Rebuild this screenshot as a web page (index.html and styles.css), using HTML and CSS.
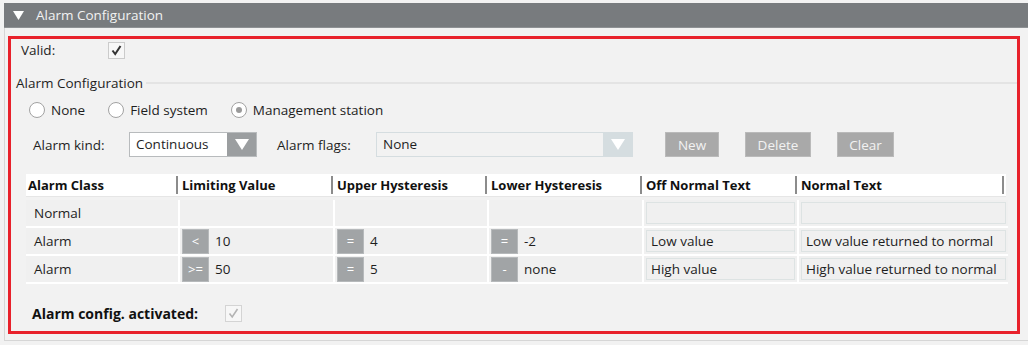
FILE: index.html
```html
<!DOCTYPE html>
<html lang="en">
<head>
  <meta charset="UTF-8" />
  <title>Alarm Configuration</title>
  <link rel="stylesheet" href="styles.css">
</head>
<body>

  <div class="panel-header">
    <svg class="caret" width="11" height="9" viewBox="0 0 11 9"><path d="M0 0 H11 L5.5 9 Z" fill="#fff"/></svg>
    <span class="panel-title">Alarm Configuration</span>
  </div>

  <div class="panel-body">
    <div class="highlight">

      <div class="valid-row">
        <span class="valid-label">Valid:</span>
        <span class="check">
          <svg width="13" height="13" viewBox="0 0 13 13"><path d="M2.5 6.5 L5.2 10 L10.5 2" fill="none" stroke="#333" stroke-width="2"/></svg>
        </span>
      </div>

      <div class="group-title">
        <span>Alarm Configuration</span>
        <span class="group-line"></span>
      </div>

      <div class="radio-row">
        <label class="radio"><span class="circle"></span>None</label>
        <label class="radio"><span class="circle"></span>Field system</label>
        <label class="radio"><span class="circle checked"></span>Management station</label>
      </div>

      <div class="combo-row">
        <span class="field-label kind-label">Alarm kind:</span>
        <div class="combo kind">
          <span class="combo-text">Continuous</span>
          <span class="combo-btn"><svg width="14" height="11" viewBox="0 0 14 11"><path d="M0 0 H14 L7 11 Z" fill="#fff"/></svg></span>
        </div>
        <span class="field-label flags-label">Alarm flags:</span>
        <div class="combo flags disabled">
          <span class="combo-text">None</span>
          <span class="combo-btn"><svg width="14" height="11" viewBox="0 0 14 11"><path d="M0 0 H14 L7 11 Z" fill="#fff"/></svg></span>
        </div>
        <button class="action new">New</button>
        <button class="action delete">Delete</button>
        <button class="action clear">Clear</button>
      </div>

      <div class="grid">
        <div class="grid-head">
          <div class="hcell"><span>Alarm Class</span><i class="bar"></i></div>
          <div class="hcell"><span>Limiting Value</span><i class="bar"></i></div>
          <div class="hcell"><span>Upper Hysteresis</span><i class="bar"></i></div>
          <div class="hcell"><span>Lower Hysteresis</span><i class="bar"></i></div>
          <div class="hcell"><span>Off Normal Text</span><i class="bar"></i></div>
          <div class="hcell"><span>Normal Text</span><i class="bar"></i></div>
        </div>

        <div class="grid-body">
          <div class="cell">Normal</div>
          <div class="cell"></div>
          <div class="cell"></div>
          <div class="cell"></div>
          <div class="cell"><span class="textbox"></span></div>
          <div class="cell"><span class="textbox"></span></div>

          <div class="cell">Alarm</div>
          <div class="cell"><span class="op">&lt;</span>10</div>
          <div class="cell"><span class="op">=</span>4</div>
          <div class="cell"><span class="op">=</span>-2</div>
          <div class="cell"><span class="textbox">Low value</span></div>
          <div class="cell"><span class="textbox">Low value returned to normal</span></div>

          <div class="cell">Alarm</div>
          <div class="cell"><span class="op">&gt;=</span>50</div>
          <div class="cell"><span class="op">=</span>5</div>
          <div class="cell"><span class="op">-</span>none</div>
          <div class="cell"><span class="textbox">High value</span></div>
          <div class="cell"><span class="textbox">High value returned to normal</span></div>
        </div>
      </div>

      <div class="activated-row">
        <span class="activated-label">Alarm config. activated:</span>
        <span class="check disabled">
          <svg width="13" height="13" viewBox="0 0 13 13"><path d="M2.5 6.5 L5.2 10 L10.5 2" fill="none" stroke="#b4b4b4" stroke-width="1.6"/></svg>
        </span>
      </div>

    </div>
  </div>

</body>
</html>
```

FILE: styles.css
```css
* {
  box-sizing: border-box;
  margin: 0;
  padding: 0;
}

body {
  font-family: 'Open Sans', 'Noto Sans', sans-serif;
  font-size: 13.5px;
  color: #1e1e1e;
  background-color: #f2f2f2;
  padding-top: 3px;
  height: 345px;
  overflow: hidden;
}

.panel-header {
  margin-left: 4px;
  height: 25px;
  background-color: #787b7e;
  color: #f2f2f2;
  display: flex;
  align-items: center;
  border-bottom: 1px solid #8e9194;
}

.caret {
  margin-left: 9px;
  margin-right: 12px;
}

.panel-title {
  font-size: 13.5px;
}

.panel-body {
  margin-left: 4px;
  border-left: 1px solid #d6d6d6;
  border-bottom: 1px solid #d6d6d6;
  padding: 8px 8px 6px 3px;
}

.highlight {
  border: 3px solid #e8212b;
  padding: 2px 0 8px 0;
  height: 298px;
}

.valid-row {
  display: flex;
  align-items: center;
  height: 18px;
  padding-left: 10px;
}

.valid-label {
  width: 87px;
}

.check {
  width: 17px;
  height: 17px;
  border: 1px solid #cbcbcb;
  background-color: #f7f7f7;
  display: flex;
  align-items: center;
  justify-content: center;
}

.check.disabled {
  border-color: #d4d4d4;
}

.group-title {
  display: flex;
  align-items: center;
  height: 20px;
  margin-top: 14px;
  padding-left: 5px;
}

.group-line {
  flex: 1;
  height: 2px;
  background-color: #e4e4e4;
  margin-left: 3px;
}

.radio-row {
  display: flex;
  align-items: center;
  height: 18px;
  margin-top: 8px;
  padding-left: 18px;
}

.radio {
  display: flex;
  align-items: center;
  margin-right: 23px;
}

.circle {
  width: 16px;
  height: 16px;
  border: 1px solid #a2a2a2;
  border-radius: 50%;
  background-color: #fff;
  margin-right: 6px;
  display: flex;
  align-items: center;
  justify-content: center;
}

.circle.checked::after {
  content: "";
  width: 6px;
  height: 6px;
  border-radius: 50%;
  background-color: #9a9a9a;
}

.combo-row {
  display: flex;
  align-items: center;
  height: 25px;
  margin-top: 13px;
  padding-left: 22px;
}

.field-label {
  width: 96px;
}

.flags-label {
  margin-left: 20px;
  width: 99px;
}

.combo {
  height: 25px;
  display: flex;
  border: 1px solid #b8bbbd;
  background-color: #fff;
}

.combo.kind {
  width: 128px;
}

.combo.flags {
  width: 257px;
  border-color: #d5dde0;
  background-color: #f2f2f2;
}

.combo-text {
  flex: 1;
  padding-left: 6px;
  line-height: 22px;
}

.combo-btn {
  width: 29px;
  background-color: #9b9ea0;
  display: flex;
  align-items: center;
  justify-content: center;
}

.combo.disabled .combo-btn {
  background-color: #d5dde0;
}

.action {
  height: 25px;
  font-family: inherit;
  font-size: 13.5px;
  color: #f2f2f2;
  background-color: #a9a9a9;
  border: 1px solid #bababa;
  margin-left: 26px;
}

.action.new {
  width: 54px;
  margin-left: 32px;
}

.action.delete {
  width: 66px;
}

.action.clear {
  width: 57px;
}

.grid {
  margin-top: 17px;
  margin-left: 15px;
  width: 982px;
}

.grid-head,
.grid-body {
  display: grid;
  grid-template-columns: 152px 153px 152px 153px 153px 209px;
  column-gap: 2px;
}

.grid-head {
  height: 23px;
  background-color: #fff;
  width: 980px;
  border-bottom: 1px solid #e6e6e6;
}

.hcell {
  display: flex;
  align-items: center;
  justify-content: space-between;
  padding-left: 2px;
  font-weight: bold;
  font-size: 13px;
  color: #111;
}

.bar {
  width: 2px;
  height: 18px;
  background-color: #8c8c8c;
}

.grid-head .hcell:last-child .bar {
  margin-right: 4px;
}

.grid-body {
  grid-auto-rows: 26px;
  row-gap: 2px;
  background-color: #fff;
  margin-top: 3px;
  padding-bottom: 2px;
}

.cell {
  background-color: #f0f0f0;
  display: flex;
  align-items: center;
  padding-left: 8px;
}

.cell:nth-child(6n+2),
.cell:nth-child(6n+3),
.cell:nth-child(6n+4) {
  padding-left: 2px;
}

.cell:nth-child(6n+5),
.cell:nth-child(6n) {
  padding: 2px;
}

.op {
  width: 27px;
  height: 25px;
  background-color: #a1a4a6;
  border: 1px solid #b6b9bb;
  color: #fff;
  font-size: 13px;
  display: flex;
  align-items: center;
  justify-content: center;
  margin-right: 6px;
}

.textbox {
  flex: 1;
  height: 100%;
  border: 1px solid #dde3e3;
  padding-left: 4px;
  display: flex;
  align-items: center;
}

.activated-row {
  display: flex;
  align-items: center;
  height: 18px;
  margin-top: 20px;
  padding-left: 21px;
}

.activated-label {
  width: 193px;
  font-weight: bold;
  font-size: 14px;
  color: #111;
}
```
